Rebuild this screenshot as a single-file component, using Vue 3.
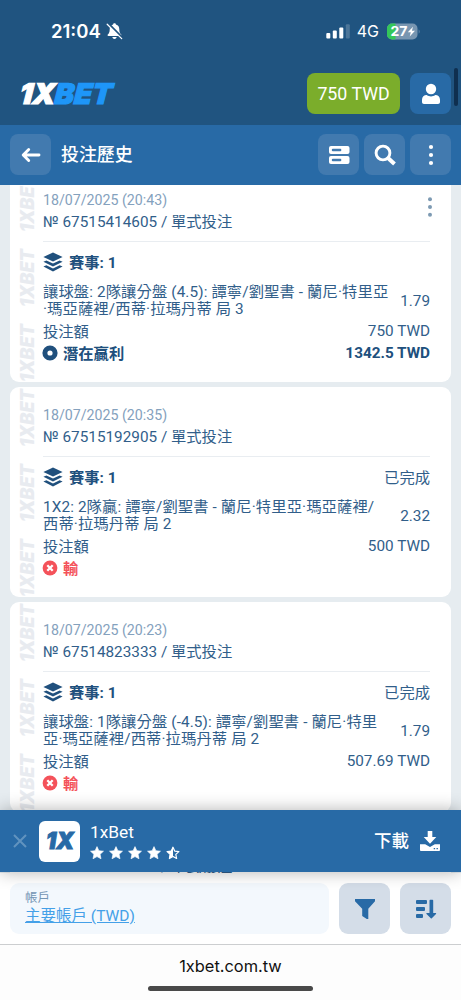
<script setup>
const bets = [
  {
    date: '18/07/2025 (20:43)', id: '67515414605', menu: true, status: '',
    lines: ['讓球盤: 2隊讓分盤 (4.5): 譚寧/劉聖書 - 蘭尼·特里亞', '·瑪亞薩裡/西蒂·拉瑪丹蒂 局 3'],
    odds: '1.79', stake: '750 TWD', win: '1342.5 TWD'
  },
  {
    date: '18/07/2025 (20:35)', id: '67515192905', status: '已完成',
    lines: ['1X2: 2隊贏: 譚寧/劉聖書 - 蘭尼·特里亞·瑪亞薩裡/', '西蒂·拉瑪丹蒂 局 2'],
    odds: '2.32', stake: '500 TWD'
  },
  {
    date: '18/07/2025 (20:23)', id: '67514823333', status: '已完成',
    lines: ['讓球盤: 1隊讓分盤 (-4.5): 譚寧/劉聖書 - 蘭尼·特里', '亞·瑪亞薩裡/西蒂·拉瑪丹蒂 局 2'],
    odds: '1.79', stake: '507.69 TWD'
  },
  { date: '', id: '67514802661' }
]
const marks = [60, 135, 210]
</script>

<template>
  <div class="phone">
    <div class="status">
      <div class="clock">
        <span>21:04</span>
        <svg width="17" height="18" viewBox="0 0 17 18">
          <path d="M8.5 1.2c-.9 0-1.3.6-1.4 1.2C4.600 3 3.700 5 3.700 7.500c0 2.700-.7 3.900-1.900 5.100-.5.6-.3 1.400.7 1.400h12c1 0 1.200-.8.7-1.400-1.200-1.200-1.900-2.400-1.900-5.100 0-2.500-.9-4.500-3.400-5.100-.1-.6-.5-1.200-1.400-1.200zM6.300 15c.3 1.300 1.100 2 2.200 2s1.900-.7 2.200-2z" fill="#fff" />
          <path d="M2 1.300l14 14.200" stroke="#205480" stroke-width="2.400" />
          <path d="M1.200 2.200l14.500 14.400" stroke="#fff" stroke-width="1.300" stroke-linecap="round" />
        </svg>
      </div>
      <div class="signal">
        <svg width="25" height="15" viewBox="0 0 25 15">
          <rect x="0.300" y="9" width="4" height="5.500" rx="1" fill="#fff" />
          <rect x="6.800" y="6.500" width="4" height="8" rx="1" fill="#fff" />
          <rect x="13.300" y="3.500" width="4" height="11" rx="1" fill="#fff" />
          <rect x="19.800" y="0.300" width="4" height="14.200" rx="1" fill="#4d7699" />
        </svg>
        <span class="net">4G</span>
        <svg width="34" height="17" viewBox="0 0 34 17">
          <defs><clipPath id="bat"><rect x="0" y="0.500" width="30.500" height="16" rx="5" /></clipPath></defs>
          <g clip-path="url(#bat)">
            <rect width="31" height="17" fill="#7896b1" />
            <rect width="8.500" height="17" fill="#34c759" />
          </g>
          <path d="M31.700 6.200q2 2.300 0 4.600z" fill="#6385a5" />
          <text x="3.500" y="13.300" font-family="Inter, sans-serif" font-size="13.500" font-weight="700" fill="#fff" textLength="17" lengthAdjust="spacingAndGlyphs">27</text>
          <path d="M26 3.800l-5.200 5.500h3L22.700 13.500l5.300-5.700h-3.100z" fill="#fff" />
        </svg>
      </div>
    </div>

    <header class="top">
      <svg class="logo" width="98" height="26" viewBox="0 0 98 26" font-family="Inter, sans-serif" font-weight="900" font-style="italic" font-size="28.500" stroke-width="1.200">
        <g transform="skewX(-5)">
          <text x="2" y="23" textLength="35.500" lengthAdjust="spacingAndGlyphs" fill="#fff" stroke="#fff">1X</text>
          <text x="37" y="23" textLength="57.500" lengthAdjust="spacingAndGlyphs" fill="#1e96f8" stroke="#1e96f8">BET</text>
        </g>
      </svg>
      <button class="balance">750 TWD</button>
      <button class="sq solid">
        <svg width="20" height="22" viewBox="0 0 20 22" fill="#fff">
          <circle cx="10" cy="6" r="5.200" />
          <path d="M1 19v-2.300c0-2.700 2-4.700 4.700-4.700 1.500 1 2.900 1.400 4.300 1.400s2.800-.4 4.300-1.400c2.700 0 4.700 2 4.700 4.700V19c0 1.200-.8 2-2 2H3c-1.200 0-2-.8-2-2z" />
        </svg>
      </button>
      <i class="scroller"></i>
    </header>

    <nav class="bar">
      <button class="sq">
        <svg width="20" height="16" viewBox="0 0 20 16"><path d="M18 8H2.500M7.700 2.500L2.200 8l5.500 5.500" fill="none" stroke="#fff" stroke-width="2.900" stroke-linecap="round" stroke-linejoin="round" /></svg>
      </button>
      <h1>投注歷史</h1>
      <button class="sq">
        <svg width="22" height="20" viewBox="0 0 22 20">
          <rect x="1" y="1" width="20.500" height="8" rx="2" fill="#fff" /><rect x="1" y="11" width="20.500" height="8" rx="2" fill="#fff" />
          <rect x="3.800" y="3.700" width="9.500" height="2.500" rx="1" fill="#427aaf" /><rect x="3.800" y="13.700" width="9.500" height="2.500" rx="1" fill="#427aaf" />
        </svg>
      </button>
      <button class="sq">
        <svg width="22" height="22" viewBox="0 0 22 22" fill="none" stroke="#fff"><circle cx="9" cy="9" r="6.900" stroke-width="2.900" /><path d="M14 14l6.500 6" stroke-width="4" /></svg>
      </button>
      <button class="sq">
        <svg width="6" height="22" viewBox="0 0 6 22" fill="#fff"><circle cx="3" cy="3" r="2.100" /><circle cx="3" cy="11" r="2.100" /><circle cx="3" cy="19" r="2.100" /></svg>
      </button>
    </nav>

    <main class="list">
      <article v-for="b in bets" :key="b.id" class="card">
        <svg v-if="b.date" class="mark" width="20" height="210" viewBox="0 0 20 210" font-family="Inter, sans-serif" font-weight="900" font-style="italic" font-size="18.500" fill="#e8ebf0">
          <text v-for="m in marks" :key="m" :transform="`translate(16.500 ${m}) rotate(-90)`" textLength="58" lengthAdjust="spacingAndGlyphs">1XBET</text>
        </svg>
        <div class="head">
          <div class="date">{{ b.date }}</div>
          <div class="num">№ {{ b.id }} / 單式投注</div>
          <svg v-if="b.menu" class="dots" width="6" height="20" viewBox="0 0 6 20" fill="#7d9ab3"><circle cx="3" cy="2.300" r="2" /><circle cx="3" cy="10" r="2" /><circle cx="3" cy="17.700" r="2" /></svg>
        </div>
        <template v-if="b.date">
          <div class="row event">
            <svg width="20" height="20" viewBox="0 0 20 20" fill="#20507d">
              <path d="M10 .4l9.600 4.600L10 9.600.4 5z" />
              <path d="M.4 9.800l3-1.400L10 11.600l6.600-3.200 3 1.400L10 14.500z" />
              <path d="M.4 14.600l3-1.400 6.600 3.200 6.600-3.200 3 1.400L10 19.400z" />
            </svg>
            <b>賽事: 1</b>
            <span class="right zh">{{ b.status }}</span>
          </div>
          <div class="row detail">
            <div class="lines"><div v-for="l in b.lines" :key="l">{{ l }}</div></div>
            <span class="right">{{ b.odds }}</span>
          </div>
          <div class="row"><span class="zh">投注額</span><span class="right">{{ b.stake }}</span></div>
          <div v-if="b.win" class="row result">
            <svg width="16" height="16" viewBox="0 0 16 16"><circle cx="8" cy="8" r="5.100" fill="none" stroke="#20507d" stroke-width="5" /></svg>
            <b>潛在贏利</b><b class="right">{{ b.win }}</b>
          </div>
          <div v-else class="row result lost">
            <svg width="16" height="16" viewBox="0 0 16 16"><circle cx="8" cy="8" r="7.400" fill="#f4525a" /><path d="M5.300 5.300l5.400 5.400M10.700 5.300l-5.400 5.400" stroke="#fff" stroke-width="2.300" /></svg>
            <b>輸</b>
          </div>
        </template>
      </article>
    </main>

    <aside class="promo">
      <svg class="close" width="14" height="14" viewBox="0 0 14 14"><path d="M1 1l12 12M13 1L1 13" stroke="#6193bf" stroke-width="2" /></svg>
      <div class="app">
        <svg width="34" height="22" viewBox="0 0 34 22" font-family="Inter, sans-serif" font-weight="900" font-style="italic" font-size="22.500"><text x="3" y="18.500" textLength="28" lengthAdjust="spacingAndGlyphs" fill="#286aa6" stroke="#286aa6" stroke-width=".9">1X</text></svg>
      </div>
      <div class="info">
        <div class="name">1xBet</div>
        <div class="stars">
          <svg v-for="n in 5" :key="n" width="14" height="14" viewBox="0 0 14 14">
            <path v-if="n < 5" d="M7 .6l1.900 4.100 4.600.5-3.400 3.100.9 4.500L7 10.600l-4 2.200.9-4.500L.5 5.200l4.600-.5z" fill="#fff" stroke="#fff" stroke-width=".6" stroke-linejoin="round" />
            <template v-else>
              <path d="M7 1.200l1.700 3.900 4.200.5-3.100 2.800.8 4.100L7 10.500l-3.600 2 .8-4.100L1.100 5.600l4.200-.5z" fill="none" stroke="#fff" stroke-width="1.200" stroke-linejoin="round" />
              <path d="M7 .6v10L3 12.800l.9-4.500L.5 5.200l4.600-.5z" fill="#fff" />
            </template>
          </svg>
        </div>
      </div>
      <span class="get">下載</span>
      <svg width="22" height="22" viewBox="0 0 22 22">
        <path d="M8.700 1h4.600v6h4L11 13.700 4.700 7h4z" fill="#fff" />
        <path d="M1 14.200h5.200l4.800 2.900 4.800-2.900H21v5.600c0 .8-.4 1.200-1.200 1.200H2.200c-.8 0-1.200-.4-1.200-1.200z" fill="#fff" />
        <path d="M14.700 18.600h1.400M17.500 18.600h1.400" stroke="#286aa6" stroke-width="1.300" />
      </svg>
    </aside>

    <section class="filters">
      <div class="account"><small>帳戶</small><a>主要帳戶 (TWD)</a></div>
      <button class="tool">
        <svg width="22" height="22" viewBox="0 0 22 22"><path d="M1 1h20v2.200l-6.700 7.600V21h-1.500l-4.600-3v-7.200L1 3.200z" fill="#286aa6" /></svg>
      </button>
      <button class="tool">
        <svg width="22" height="20" viewBox="0 0 22 20" fill="#286aa6">
          <rect x="1" y="1" width="11" height="4" rx="1" /><rect x="1" y="8" width="9" height="4" rx="1" /><rect x="1" y="15" width="7" height="4" rx="1" />
          <path d="M14.500 1.500q0-.7.700-.7h2.300q.7 0 .7.700V14h2.600q.7.300.2.900L16.800 19.300q-.5.400-1 0L11.500 14.900q-.5-.6.200-.9h2.800z" />
        </svg>
      </button>
    </section>
    <footer class="browser"><div class="url">1xbet.com.tw</div><i></i></footer>
  </div>
</template>

<style>
html, body { margin: 0; background: #fff; }
</style>

<style scoped>
* { box-sizing: border-box; }
.phone { position: relative; width: 461px; height: 1000px; overflow: hidden; display: flex; flex-direction: column; font-family: Roboto, "Noto Sans CJK TC", sans-serif; color: #315e8a; }
button { border: 0; padding: 0; font: inherit; display: flex; align-items: center; justify-content: center; flex: none; }
svg { display: block; flex: none; }
.logo, .mark { overflow: visible; }
.status { height: 62px; background: #205480; color: #fff; display: flex; justify-content: space-between; padding: 0 41px 0 51px; font-family: Inter, sans-serif; }
.clock, .signal { display: flex; align-items: center; height: 62px; }
.signal { margin-right: -1px; }
.clock span { font-size: 18.500px; font-weight: 600; margin-right: 5px; }
.net { font-size: 16px; margin: 0 8px 0 6px; line-height: 20px; }
.top { height: 63px; background: #205480; display: flex; align-items: center; padding: 0 10px 0 19px; position: relative; }
.logo { margin-right: auto; }
.balance { width: 93px; height: 41px; border-radius: 8px; background: #7bad2b; color: #fff; font-size: 17.800px; margin-right: 10px; }
.sq { width: 41px; height: 41px; border-radius: 8px; background: #427aaf; }
.sq.solid { background: #286aa6; }
.scroller { position: absolute; right: 3px; top: 6px; width: 4px; height: 38px; border-radius: 2px; background: #0f2f4f; }
.bar { height: 60px; background: #286aa6; display: flex; align-items: center; gap: 5px; padding: 0 10px 1px; }
h1 { margin: 0 auto 0 5px; font-size: 17.900px; line-height: 24px; font-weight: 500; color: #fff; }
.list { height: 688px; background: #e6ecf0; overflow: hidden; padding: 0 10px; display: flex; flex-direction: column; gap: 5px; }
.card { position: relative; height: 210px; flex: none; border-radius: 9px; background: #fff; padding: 17px 21px 0 33px; font-size: 15.300px; }
.card:first-child { margin-top: -13px; }
.mark { position: absolute; left: 7px; top: 0; }
.head { position: relative; height: 53px; border-bottom: 1px solid #e9edf1; white-space: nowrap; }
.date { font-size: 14.200px; height: 22px; line-height: 22px; color: #84a1bd; }
.num { line-height: 22px; }
.dots { position: absolute; right: -3px; top: 8px; }
.row { display: flex; align-items: center; height: 22px; white-space: nowrap; }
.row b { color: #20507d; font-weight: 700; }
.row .zh, .event b, .result b:not(.right) { padding-bottom: 3px; }
.right { margin-left: auto; }
.event { margin-top: 9px; }
.event b { margin-left: 6px; }
.detail { height: 36px; margin: 10px 0 1px; }
.lines { line-height: 17px; letter-spacing: .12px; }
.result b { margin-left: 5px; }
.result svg { margin-left: -1px; }
.result b.right { margin-left: auto; }
.row.lost b { color: #f4525a; }
.promo { position: absolute; left: 0; top: 810px; width: 461px; height: 62px; background: #286aa6; color: #fff; display: flex; align-items: center; padding: 0 20px 0 13px; box-shadow: 0 0 16px rgba(0, 0, 0, .3); }
.app { width: 41px; height: 41px; border-radius: 6px; background: #fff; display: flex; align-items: center; justify-content: center; margin: 0 11px 0 12px; }
.info { margin-left: -1px; padding-bottom: 2px; }
.name { font-size: 17.300px; line-height: 22px; }
.stars { display: flex; gap: 5px; margin-top: 3px; }
.get { margin: 0 10px 0 auto; padding-bottom: 3px; font-size: 17.500px; font-weight: 500; }
.filters { height: 71px; background: #fff; display: flex; gap: 10px; padding: 10px 10px 0; }
.account { flex: 1; height: 51px; border-radius: 9px; background: #f3f8fd; padding: 6px 15px; display: flex; flex-direction: column; }
.account small { font-size: 12.500px; line-height: 17px; color: #7495b4; }
.account a { font-size: 15.500px; line-height: 21px; color: #44a0e8; text-decoration: underline; }
.tool { width: 51px; height: 51px; border-radius: 9px; background: #d4dde8; }
.browser { height: 56px; border-top: 1px solid #ccced0; background: #fdfdfd; display: flex; flex-direction: column; align-items: center; }
.url { font: 16.400px/24px Inter, sans-serif; color: #111; margin-top: 9px; }
.browser i { width: 165px; height: 5px; border-radius: 3px; background: #494949; margin-top: 8px; }
</style>
